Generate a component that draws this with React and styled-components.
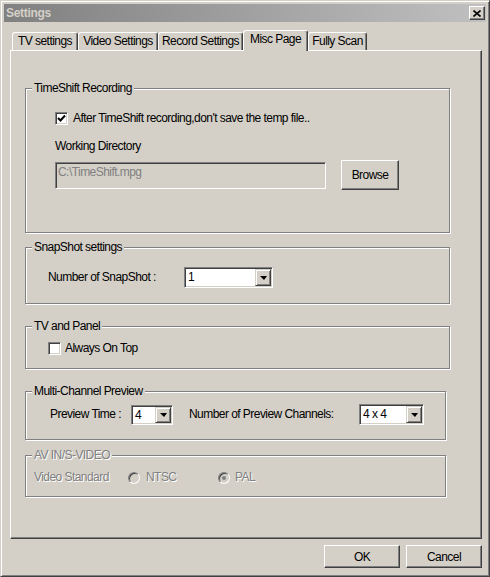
import styled, { createGlobalStyle } from "styled-components";

const GlobalStyle = createGlobalStyle`
  html, body {
    margin: 0;
    padding: 0;
    background: #d4d0c8;
  }
  * {
    box-sizing: border-box;
  }
  body {
    font-family: "Liberation Sans Narrow", "Liberation Sans", Arial, sans-serif;
    font-size: 12px;
    letter-spacing: -0.55px;
    color: #000;
  }
`;

const tabs = [
  { label: "TV settings", w: 66 },
  { label: "Video Settings", w: 80 },
  { label: "Record Settings", w: 85 },
  { label: "Misc Page", w: 65, active: true },
  { label: "Fully Scan", w: 59 },
];

const Window = styled.div`
  width: 490px;
  height: 577px;
  background: #d4d0c8;
  border: 1px solid;
  border-color: #d4d0c8 #404040 #404040 #d4d0c8;
  box-shadow: inset 1px 1px #fff, inset -1px -1px #808080;
  padding: 3px;
  display: flex;
  flex-direction: column;
`;

const TitleBar = styled.div`
  height: 18px;
  flex: none;
  display: flex;
  align-items: center;
  justify-content: space-between;
  padding: 0 1px 0 2px;
  background: linear-gradient(90deg, #808080, #c0c0c0);
`;

const Title = styled.span`
  font-weight: bold;
  font-size: 12px;
  letter-spacing: -0.3px;
  color: #d4d0c8;
  line-height: 18px;
`;

const CloseBtn = styled.div`
  width: 16px;
  height: 14px;
  display: flex;
  align-items: center;
  justify-content: center;
  background: #d4d0c8;
  border: 1px solid;
  border-color: #fff #404040 #404040 #fff;
  box-shadow: inset -1px -1px #808080;
`;

const Body = styled.div`
  flex: 1;
  display: flex;
  flex-direction: column;
  padding: 8px 4px 0 6px;
`;

const TabRow = styled.div`
  display: flex;
  height: 21px;
  margin-bottom: -1px;
  padding-left: 2px;
  position: relative;
  z-index: 1;
`;

const Tab = styled.div`
  width: ${(p) => p.$w}px;
  height: ${(p) => (p.$active ? 21 : 18)}px;
  margin-top: ${(p) => (p.$active ? 0 : 2)}px;
  background: #d4d0c8;
  border: 1px solid;
  border-bottom: none;
  border-color: #fff #404040 transparent #fff;
  border-radius: 3px 3px 0 0;
  box-shadow: inset -1px 0 #808080;
  text-align: center;
  line-height: 16px;
  white-space: nowrap;
`;

const Panel = styled.div`
  width: 472px;
  height: 489px;
  flex: none;
  border: 1px solid;
  border-color: #fff #404040 #404040 #fff;
  box-shadow: inset -1px -1px #808080;
  padding: 37px 0 0 14px;
  display: flex;
  flex-direction: column;
`;

const Group = styled.div`
  position: relative;
  width: ${(p) => p.$w}px;
  height: ${(p) => p.$h}px;
  margin-top: ${(p) => p.$mt || 0}px;
  border: 1px solid #808080;
  box-shadow: 1px 1px 0 #fff, inset 1px 1px 0 #fff;
  padding: ${(p) => p.$pad};
`;

const Legend = styled.span`
  position: absolute;
  top: -8px;
  left: 6px;
  padding: 0 2px;
  line-height: 15px;
  background: #d4d0c8;
  white-space: nowrap;
  color: ${(p) => (p.$disabled ? "#808080" : "#000")};
  text-shadow: ${(p) => (p.$disabled ? "1px 1px #fff" : "none")};
`;

const Column = styled.div`
  display: flex;
  flex-direction: column;
  align-items: flex-start;
`;

const Row = styled.div`
  display: flex;
  align-items: center;
  gap: ${(p) => p.$gap || 0}px;
  margin-top: ${(p) => p.$mt || 0}px;
`;

const Label = styled.span`
  width: ${(p) => (p.$w ? `${p.$w}px` : "auto")};
  flex: none;
  line-height: 13px;
  white-space: nowrap;
  margin-top: ${(p) => p.$mt || 0}px;
  margin-left: ${(p) => p.$ml || 0}px;
  color: ${(p) => (p.$disabled ? "#808080" : "#000")};
  text-shadow: ${(p) => (p.$disabled ? "1px 1px #fff" : "none")};
`;

const CheckBox = styled.div`
  width: 13px;
  height: 13px;
  flex: none;
  background: #fff;
  border: 1px solid;
  border-color: #808080 #fff #fff #808080;
  box-shadow: inset 1px 1px #404040, inset -1px -1px #d4d0c8;
  display: flex;
  align-items: center;
  justify-content: center;
`;

const TextField = styled.div`
  width: 271px;
  height: 27px;
  background: #d4d0c8;
  border: 1px solid;
  border-color: #808080 #fff #fff #808080;
  box-shadow: inset 1px 1px #404040, inset -1px -1px #d4d0c8;
  padding: 3px 2px 0 2px;
  color: #808080;
  line-height: 13px;
`;

const Button = styled.div`
  width: ${(p) => p.$w}px;
  height: ${(p) => p.$h}px;
  flex: none;
  background: #d4d0c8;
  border: 1px solid;
  border-color: #fff #404040 #404040 #fff;
  box-shadow: inset -1px -1px #808080;
  display: flex;
  align-items: center;
  justify-content: center;
`;

const Combo = styled.div`
  width: ${(p) => p.$w}px;
  height: ${(p) => p.$h}px;
  flex: none;
  background: #fff;
  border: 1px solid;
  border-color: #808080 #fff #fff #808080;
  box-shadow: inset 1px 1px #404040, inset -1px -1px #d4d0c8;
  padding: 1px;
  display: flex;
  align-items: stretch;
`;

const ComboValue = styled.span`
  flex: 1;
  padding-left: 2px;
  line-height: ${(p) => p.$lh}px;
  white-space: nowrap;
`;

const DropBtn = styled.div`
  width: 16px;
  flex: none;
  background: #d4d0c8;
  border: 1px solid;
  border-color: #d4d0c8 #404040 #404040 #d4d0c8;
  box-shadow: inset 1px 1px #fff, inset -1px -1px #808080;
  display: flex;
  align-items: center;
  justify-content: center;
  &::after {
    content: "";
    border-left: 4px solid transparent;
    border-right: 3px solid transparent;
    border-top: 4px solid #000;
    margin-top: 1px;
  }
`;

const Radio = styled.div`
  width: 12px;
  height: 12px;
  flex: none;
  border-radius: 50%;
  border: 1px solid;
  border-color: #808080 #fff #fff #808080;
  box-shadow: inset 1px 1px #404040, inset -1px -1px #d4d0c8;
  background: #d4d0c8;
  display: flex;
  align-items: center;
  justify-content: center;
  &::after {
    content: "";
    display: ${(p) => (p.$checked ? "block" : "none")};
    width: 4px;
    height: 4px;
    border-radius: 50%;
    background: #808080;
  }
`;

const Footer = styled.div`
  display: flex;
  justify-content: flex-end;
  gap: 6px;
  margin-top: 6px;
`;

const Check = () => (
  <svg width="9" height="9" viewBox="0 0 9 9">
    <path d="M1 4 L3.5 6.5 L8 1.5" fill="none" stroke="#000" strokeWidth="2" />
  </svg>
);

const CloseX = () => (
  <svg width="8" height="7" viewBox="0 0 8 7">
    <path d="M0.5 0.5 L7.5 6.5 M7.5 0.5 L0.5 6.5" stroke="#000" strokeWidth="1.6" />
  </svg>
);

const Select = ({ w, h, value }) => (
  <Combo $w={w} $h={h}>
    <ComboValue $lh={h - 4}>{value}</ComboValue>
    <DropBtn />
  </Combo>
);

export default function App() {
  return (
    <>
      <GlobalStyle />
      <Window>
        <TitleBar>
          <Title>Settings</Title>
          <CloseBtn>
            <CloseX />
          </CloseBtn>
        </TitleBar>
        <Body>
          <TabRow>
            {tabs.map((t) => (
              <Tab key={t.label} $w={t.w} $active={t.active}>
                {t.label}
              </Tab>
            ))}
          </TabRow>
          <Panel>
            <Group $w={425} $h={145} $pad="23px 0 0 29px">
              <Legend>TimeShift Recording</Legend>
              <Column>
                <Row $gap={5}>
                  <CheckBox>
                    <Check />
                  </CheckBox>
                  <Label>After TimeShift recording,don't save the temp file..</Label>
                </Row>
                <Label $mt={15}>Working Directory</Label>
                <Row $gap={15} $mt={7}>
                  <TextField>C:\TimeShift.mpg</TextField>
                  <Button $w={58} $h={30}>Browse</Button>
                </Row>
              </Column>
            </Group>

            <Group $w={425} $h={57} $mt={14} $pad="19px 0 0 22px">
              <Legend>SnapShot settings</Legend>
              <Row>
                <Label $w={136}>Number of SnapShot :</Label>
                <Select w={89} h={21} value="1" />
              </Row>
            </Group>

            <Group $w={425} $h={43} $mt={22} $pad="15px 0 0 22px">
              <Legend>TV and Panel</Legend>
              <Row $gap={4}>
                <CheckBox />
                <Label>Always On Top</Label>
              </Row>
            </Group>

            <Group $w={421} $h={49} $mt={22} $pad="12px 0 0 24px">
              <Legend>Multi-Channel Preview</Legend>
              <Row>
                <Label $w={81}>Preview Time :</Label>
                <Select w={42} h={20} value="4" />
                <Label $w={170} $ml={16}>Number of Preview Channels:</Label>
                <Select w={65} h={21} value="4 x 4" />
              </Row>
            </Group>

            <Group $w={421} $h={42} $mt={15} $pad="15px 0 0 8px">
              <Legend $disabled>AV IN/S-VIDEO</Legend>
              <Row>
                <Label $w={94} $disabled>Video Standard</Label>
                <Radio />
                <Label $w={72} $ml={6} $disabled>NTSC</Label>
                <Radio $checked />
                <Label $ml={5} $disabled>PAL</Label>
              </Row>
            </Group>
          </Panel>
          <Footer>
            <Button $w={76} $h={23}>OK</Button>
            <Button $w={76} $h={23}>Cancel</Button>
          </Footer>
        </Body>
      </Window>
    </>
  );
}
